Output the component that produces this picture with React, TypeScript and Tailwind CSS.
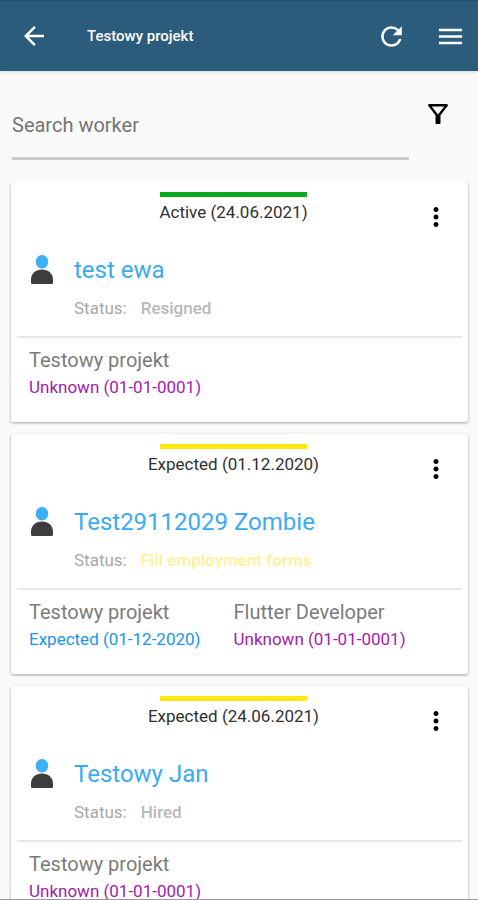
import { useState } from "react";
import {
  MdArrowBack,
  MdMenu,
  MdMoreVert,
  MdOutlineFilterAlt,
  MdRefresh,
} from "react-icons/md";

interface IPosition {
  title: string;
  state: string;
  stateClass: string;
}

interface IWorker {
  name: string;
  label: string;
  barClass: string;
  status: string;
  statusClass: string;
  positions: IPosition[];
}

const workers: IWorker[] = [
  {
    name: "test ewa",
    label: "Active (24.06.2021)",
    barClass: "bg-[#0ca81f]",
    status: "Resigned",
    statusClass: "text-[#b8b8b8]",
    positions: [
      {
        title: "Testowy projekt",
        state: "Unknown (01-01-0001)",
        stateClass: "text-[#a31aad]",
      },
    ],
  },
  {
    name: "Test29112029 Zombie",
    label: "Expected (01.12.2020)",
    barClass: "bg-[#fde910]",
    status: "Fill employment forms",
    statusClass: "text-[#fbf396]",
    positions: [
      {
        title: "Testowy projekt",
        state: "Expected (01-12-2020)",
        stateClass: "text-[#1795f2]",
      },
      {
        title: "Flutter Developer",
        state: "Unknown (01-01-0001)",
        stateClass: "text-[#a31aad]",
      },
    ],
  },
  {
    name: "Testowy Jan",
    label: "Expected (24.06.2021)",
    barClass: "bg-[#fde910]",
    status: "Hired",
    statusClass: "text-[#b8b8b8]",
    positions: [
      {
        title: "Testowy projekt",
        state: "Unknown (01-01-0001)",
        stateClass: "text-[#a31aad]",
      },
    ],
  },
];

const PersonIcon = () => (
  <svg viewBox="0 0 24 30" className="h-[30px] w-6" aria-hidden="true">
    <path
      d="M1 27.500V25C1 18.600 5.800 14.600 12 14.600S23 18.600 23 25v2.500c0 1-.6 1.500-1.500 1.500h-19C1.600 29 1 28.500 1 27.500z"
      fill="#3d3d3f"
    />
    <ellipse cx="12" cy="6.800" rx="6.300" ry="6.800" fill="#3bb0f7" />
  </svg>
);

const WorkerCard = ({ worker }: { worker: IWorker }) => {
  return (
    <article className="shrink-0 rounded-xs bg-white px-1.5 pt-2.5 pb-[23px] shadow-[0_1px_3px_rgba(0,0,0,0.36)]">
      <div className="grid grid-cols-[36px_1fr_48px]">
        <div className="col-start-2 flex flex-col items-center">
          <div className={`h-[5px] w-[147px] ${worker.barClass}`} />
          <p className="mt-[3px] text-[17px] leading-6 whitespace-nowrap text-[#303030]">
            {worker.label}
          </p>
        </div>
        <button
          type="button"
          aria-label={`Options for ${worker.name}`}
          className="mt-2.5 flex h-[30px] w-11 items-center justify-center text-black"
        >
          <MdMoreVert size={30} />
        </button>
      </div>
      <div className="mt-[22px] flex items-center gap-5 pl-[13px]">
        <PersonIcon />
        <h2 className="text-2xl leading-8 whitespace-nowrap text-[#3aabf3]">
          {worker.name}
        </h2>
      </div>
      <p className="mt-2.5 flex gap-3.5 pl-[57px] text-[17px] leading-6">
        <span className="text-[#a8a8a8]">Status:</span>
        <span className={`font-medium ${worker.statusClass}`}>
          {worker.status}
        </span>
      </p>
      <hr className="mt-4 border-t-2 border-[#e3e8e9]" />
      <ul className="mt-2 grid grid-cols-2 pr-6 pl-3">
        {worker.positions.map((position, index) => (
          <li key={index} className="whitespace-nowrap">
            <p className="text-xl leading-7 text-[#7b7b7b]">{position.title}</p>
            <p className={`mt-px text-[17px] leading-6 ${position.stateClass}`}>
              {position.state}
            </p>
          </li>
        ))}
      </ul>
    </article>
  );
};

const App = () => {
  const [search, setSearch] = useState("");

  return (
    <div className="flex h-screen flex-col border-b border-[#9a9a9a] bg-[#fafafa] font-[Roboto,sans-serif]">
      <header className="flex h-[71px] shrink-0 items-center border-t border-[#234b63] bg-[#2b5c7c] pr-3 pl-[19px] text-white shadow-[0_1px_3px_rgba(0,0,0,0.15)]">
        <button type="button" aria-label="Back">
          <MdArrowBack size={30} />
        </button>
        <h1 className="ml-[38px] flex-1 text-[15px] leading-6 font-medium">
          Testowy projekt
        </h1>
        <button type="button" aria-label="Refresh" className="mr-7">
          <MdRefresh size={31} />
        </button>
        <button type="button" aria-label="Menu">
          <MdMenu size={31} />
        </button>
      </header>
      <div className="flex shrink-0 items-start pr-[25px] pb-[22px] pl-3">
        <input
          type="text"
          aria-label="Search worker"
          placeholder="Search worker"
          value={search}
          onChange={(e) => setSearch(e.target.value)}
          className="mt-[22px] h-[67px] min-w-0 flex-1 border-b-3 border-[#cdcdcd] text-xl text-[#404040] outline-none placeholder:text-[#757575]"
        />
        <button
          type="button"
          aria-label="Filter"
          className="mt-7 ml-3.5 text-black"
        >
          <MdOutlineFilterAlt size={30} />
        </button>
      </div>
      <main className="flex min-h-0 flex-1 flex-col gap-3 overflow-y-auto pr-2.5 pl-[11px] [scrollbar-width:none]">
        {workers.map((worker) => (
          <WorkerCard key={worker.name} worker={worker} />
        ))}
      </main>
    </div>
  );
};

export default App;
